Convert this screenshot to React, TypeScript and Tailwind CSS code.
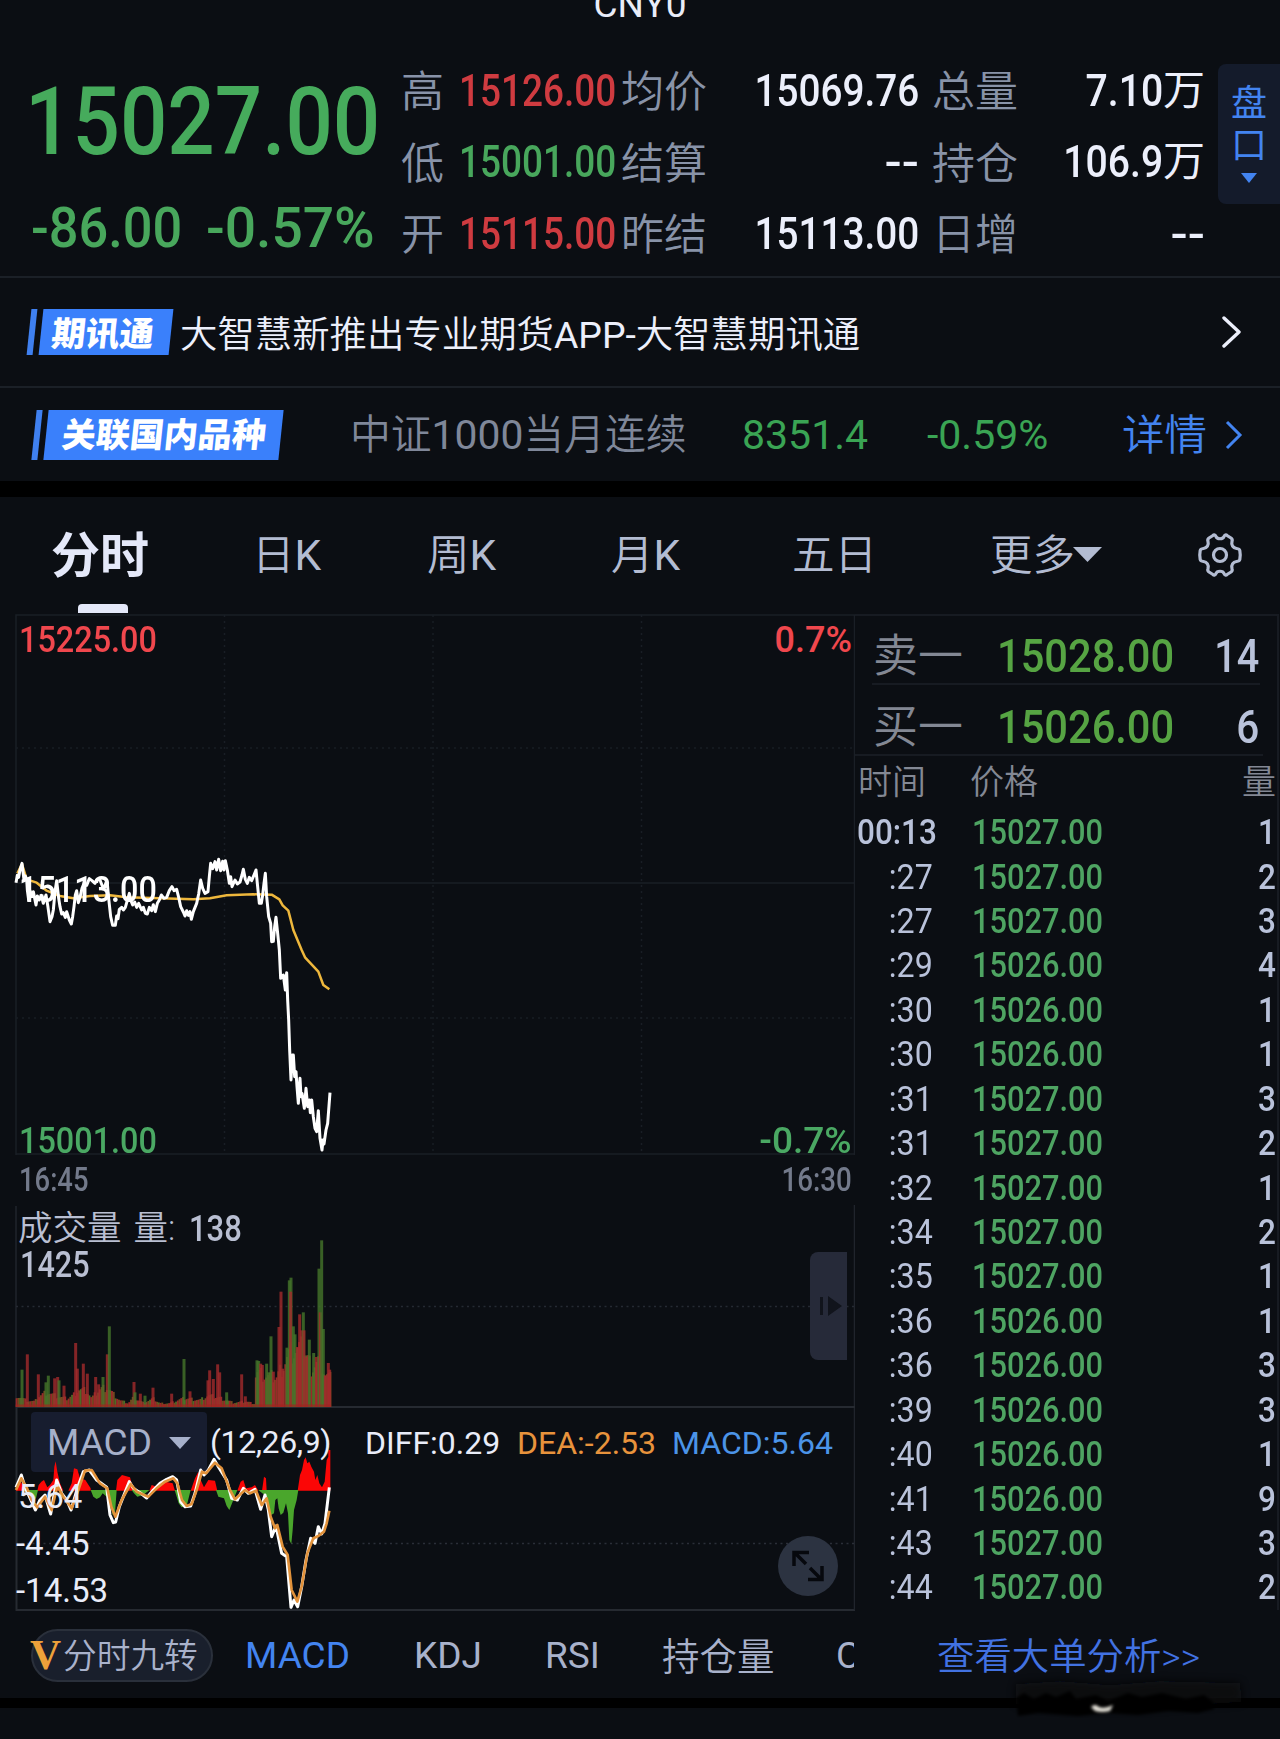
import type { ReactNode } from "react";

type Tick = { time: string; price: string; qty: string };

const stats = [
  ["高", "15126.00", "text-[#cf3b40]", "均价", "15069.76", "总量", "7.10", "万"],
  ["低", "15001.00", "text-[#48a75c]", "结算", "--", "持仓", "106.9", "万"],
  ["开", "15115.00", "text-[#cf3b40]", "昨结", "15113.00", "日增", "--", ""],
];

const ticks: Tick[] = [
  { time: "00:13", price: "15027.00", qty: "1" },
  { time: ":27", price: "15027.00", qty: "2" },
  { time: ":27", price: "15027.00", qty: "3" },
  { time: ":29", price: "15026.00", qty: "4" },
  { time: ":30", price: "15026.00", qty: "1" },
  { time: ":30", price: "15026.00", qty: "1" },
  { time: ":31", price: "15027.00", qty: "3" },
  { time: ":31", price: "15027.00", qty: "2" },
  { time: ":32", price: "15027.00", qty: "1" },
  { time: ":34", price: "15027.00", qty: "2" },
  { time: ":35", price: "15027.00", qty: "1" },
  { time: ":36", price: "15026.00", qty: "1" },
  { time: ":36", price: "15026.00", qty: "3" },
  { time: ":39", price: "15026.00", qty: "3" },
  { time: ":40", price: "15026.00", qty: "1" },
  { time: ":41", price: "15026.00", qty: "9" },
  { time: ":43", price: "15027.00", qty: "3" },
  { time: ":44", price: "15027.00", qty: "2" },
];

const priceLine =
  "48,188 52,166 56,172 60,150 66,130 72,180 76,168 80,178 82,210 86,240 90,212 96,230 100,215 108,255 112,228 118,240 124,226 130,250 138,225 144,262 150,305 156,290 160,270 165,215 170,182 176,235 180,260 185,282 190,278 196,292 200,275 208,300 214,312 218,290 222,260 226,225 230,212 235,248 240,232 246,205 252,190 260,196 268,176 276,182 285,190 292,178 300,180 306,196 312,205 318,188 322,190 326,235 332,290 338,316 346,316 350,288 354,296 358,268 365,262 370,270 376,262 388,220 392,240 398,255 404,246 410,262 416,250 425,270 430,262 436,280 442,282 448,262 455,272 460,254 466,275 472,250 478,240 484,225 492,235 500,232 508,212 516,200 522,212 530,208 536,232 542,260 550,276 555,288 560,272 565,286 570,275 574,298 580,275 590,250 596,222 602,180 608,205 615,220 624,215 628,170 632,130 638,146 645,125 650,150 656,118 662,152 668,124 672,150 676,122 682,150 688,190 692,170 696,200 705,180 712,192 720,186 726,165 730,148 736,178 742,190 748,172 755,182 762,165 768,150 772,190 778,250 784,250 788,225 792,190 796,160 800,230 806,290 812,310 815,365 820,364 824,320 828,292 834,350 838,390 842,475 850,465 852,480 856,510 860,458 863,540 866,600 869,690 873,780 877,705 880,705 884,770 888,755 891,800 895,850 900,775 903,830 906,820 913,865 918,805 923,860 928,840 931,878 935,840 940,890 945,925 950,935 955,872 960,955 966,990 969,960 972,972 978,930 983,910 990,818";

const avgLine =
  "52,160 66,132 80,178 110,188 140,212 180,228 220,235 270,228 330,226 380,232 480,235 580,238 630,235 680,226 760,223 815,224 838,238 848,256 865,272 880,330 905,390 915,412 955,455 970,495 988,508";

// volume envelope: x, bar height
const volBase = [
  [48, 44], [60, 36], [80, 24], [105, 20], [115, 38], [140, 56], [165, 42], [200, 30], [220, 44], [235, 66],
  [260, 60], [275, 32], [300, 66], [320, 74], [340, 48], [360, 24], [385, 14], [400, 34], [430, 16], [460, 30],
  [480, 14], [510, 14], [540, 28], [560, 32], [600, 26], [625, 42], [660, 34], [700, 16], [740, 20], [764, 12],
  [768, 128], [800, 112], [830, 110], [870, 200], [910, 215], [935, 145], [960, 175], [975, 120], [992, 105],
];

// single tall bars: x, height, colour
const volPeaks: [number, number, string][] = [
  [66, 112, "g"], [82, 158, "r"], [115, 98, "r"], [138, 74, "g"], [145, 94, "g"], [164, 86, "r"], [173, 90, "r"],
  [177, 80, "g"], [192, 64, "r"], [227, 192, "r"], [232, 115, "r"], [250, 130, "r"], [262, 100, "r"], [287, 90, "r"],
  [296, 68, "r"], [309, 90, "g"], [322, 158, "r"], [328, 242, "g"], [402, 75, "r"], [405, 44, "g"], [421, 40, "r"],
  [435, 34, "g"], [459, 58, "r"], [515, 40, "r"], [552, 144, "g"], [570, 47, "r"], [624, 80, "r"], [629, 110, "r"],
  [640, 84, "r"], [653, 128, "r"], [659, 104, "r"], [680, 44, "g"], [725, 98, "r"], [736, 32, "r"], [771, 140, "g"],
  [776, 138, "g"], [782, 130, "r"], [787, 126, "r"], [800, 130, "g"], [806, 104, "g"], [813, 212, "g"], [820, 106, "r"],
  [837, 240, "r"], [843, 346, "r"], [848, 115, "r"], [861, 178, "g"], [868, 380, "g"], [873, 388, "g"], [872, 346, "r"],
  [880, 242, "g"], [885, 218, "g"], [892, 180, "r"], [899, 278, "r"], [905, 230, "r"], [910, 284, "g"], [912, 230, "r"],
  [920, 150, "r"], [928, 202, "g"], [941, 162, "g"], [949, 150, "r"], [957, 415, "g"], [961, 284, "r"], [965, 500, "g"],
  [970, 234, "g"], [976, 95, "r"], [985, 132, "r"], [989, 112, "r"],
];

function envelope(x: number) {
  for (let i = 1; i < volBase.length; i++) {
    const [x1, h1] = volBase[i - 1];
    const [x2, h2] = volBase[i];
    if (x <= x2) return h1 + ((h2 - h1) * (x - x1)) / (x2 - x1);
  }
  return 0;
}

const volBars = Array.from({ length: 182 }, (_, i) => {
  const x = 50 + i * 5.2;
  const jitter = 0.62 + (((i * 37) % 17) / 17) * 0.4;
  const mod = (i * 7) % 5;
  return { x, h: envelope(x) * jitter, fill: mod < 2 ? "#98282a" : mod < 4 ? "#74481f" : "#4f6a25" };
});

const diffLine =
  "48,262 64,225 75,262 88,290 106,330 120,300 135,285 152,342 170,240 185,280 200,300 213,330 222,300 232,265 250,215 268,210 290,240 320,262 330,345 340,368 347,366 358,320 388,245 400,265 420,278 440,294 460,270 480,250 500,238 518,230 530,240 542,305 555,320 572,318 585,280 602,210 612,225 625,210 642,178 655,200 680,240 695,295 712,300 730,265 745,280 765,268 782,328 795,285 805,330 815,410 828,378 845,460 860,470 873,622 882,600 893,620 905,560 918,480 932,415 945,430 955,380 965,402 975,370 988,262";

const deaLine =
  "48,270 64,235 80,262 95,300 112,322 135,290 155,330 172,258 190,290 215,325 235,270 255,212 275,210 300,250 322,265 334,320 346,350 365,300 392,252 410,275 445,290 470,265 495,245 520,235 532,250 546,300 560,318 575,312 590,270 606,215 618,220 645,188 665,205 690,270 705,298 735,270 750,280 768,272 785,315 800,295 812,350 825,385 832,375 848,440 863,465 875,570 892,605 905,560 922,460 940,415 955,408 972,395 980,370 988,332";

function Num({ children, className = "" }: { children: ReactNode; className?: string }) {
  return <span className={`inline-block font-medium ${className}`}>{children}</span>;
}

function Badge({ text, className }: { text: string; className: string }) {
  return (
    <div className="flex gap-[6px] -skew-x-[6deg]">
      <div className="w-[6px] bg-[#3f80f0]" />
      <div className={`flex items-center bg-[#3a80fb] font-black text-white ${className}`}>{text}</div>
    </div>
  );
}

function Quote() {
  return (
    <section className="relative h-[276px] shrink-0 overflow-hidden">
      <div className="-mt-[14px] h-[38px] text-center text-[37px] leading-[38px] text-[#e9ecf8]">CNY0</div>
      <div className="flex">
        <div className="w-[402px] shrink-0 pt-[48px]">
          <div className="h-[100px] pl-[25px] text-[94px] leading-[100px] text-[#46ab5c]">
            <Num className="origin-left scale-x-[0.888]">15027.00</Num>
          </div>
          <div className="mt-[28px] flex h-[56px] pl-[31px] text-[56px] leading-[56px] text-[#48a75c]">
            <div className="w-[175px]">
              <Num className="origin-left scale-x-[0.935]">-86.00</Num>
            </div>
            <Num className="origin-left scale-x-[0.985]">-0.57%</Num>
          </div>
        </div>
        <div className="w-[816px] shrink-0 pt-[31px]">
          {stats.map(([l1, v1, color, l2, v2, l3, v3, unit]) => (
            <div key={l1} className="flex h-[71.5px] items-center text-[44px] leading-[60px] text-[#eceffb]">
              <div className="-ml-px w-[58px] shrink-0 pt-[3px] text-[43px] font-[350] text-[#8893a8]">{l1}</div>
              <div className={`w-[162px] shrink-0 ${color}`}>
                <Num className="origin-left scale-x-[0.84]">{v1}</Num>
              </div>
              <div className="w-[87px] shrink-0 pt-[3px] text-[43px] font-[350] text-[#8893a8]">{l2}</div>
              <div className="w-[211px] shrink-0 text-right">
                <Num className={v2 === "--" ? "origin-right scale-x-[1.15]" : "origin-right scale-x-[0.88]"}>{v2}</Num>
              </div>
              <div className="w-[98px] shrink-0 pt-[3px] pl-[13px] text-[43px] font-[350] text-[#8893a8]">{l3}</div>
              <div className="flex w-[188px] shrink-0 justify-end">
                <Num className={v3 === "--" ? "origin-right scale-x-[1.15]" : "origin-right scale-x-[0.89]"}>{v3}</Num>
                {unit && <span className="text-[42px]">{unit}</span>}
              </div>
            </div>
          ))}
        </div>
        <div className="mt-[40px] flex h-[140px] w-[62px] flex-col items-center rounded-l-lg bg-[#141b2b] pt-[19px] text-[36px] leading-[42px] text-[#4384f0]">
          <span>盘</span>
          <span>口</span>
          <svg className="mt-[6px]" width="16" height="10" viewBox="0 0 16 10" fill="#4384f0">
            <path d="M0 0h16L8 10z" />
          </svg>
        </div>
      </div>
    </section>
  );
}

function Promo() {
  return (
    <section className="flex h-[110px] shrink-0 items-center border-t-2 border-[#1b2027] pl-[29px]">
      <div className="flex h-[46px]">
        <Badge text="期讯通" className="w-[130px] pt-[3px] pl-[11px] text-[34px] leading-[46px]" />
      </div>
      <div className="ml-[9px] flex-1 pt-[5px] text-[37.4px] leading-[60px] font-[350] text-[#eceffb]">
        大智慧新推出专业期货<span className="font-normal">APP-</span>大智慧期讯通
      </div>
      <svg className="mr-[38px]" width="20" height="32" viewBox="0 0 20 32" fill="none" stroke="#eceffb" strokeWidth="3.4">
        <path d="M2 2l15 14L2 30" strokeLinecap="round" strokeLinejoin="round" />
      </svg>
    </section>
  );
}

function Related() {
  return (
    <section className="flex h-[95px] shrink-0 items-center border-t-2 border-[#1b2027] pl-[34px] text-[41px] leading-[60px]">
      <div className="flex h-[50px]">
        <Badge text="关联国内品种" className="w-[235px] pl-[16px] text-[34px] leading-[50px]" />
      </div>
      <div className="ml-[69px] w-[392px] shrink-0 pt-[1px] text-[40.8px] font-[350] text-[#7f8799]">
        中证<span className="font-normal">1000</span>当月连续
      </div>
      <div className="w-[185px] shrink-0 text-[#3aa454]">8351.4</div>
      <div className="w-[195px] shrink-0 text-[#3aa454]">-0.59%</div>
      <div className="w-[103px] shrink-0 pt-[2px] text-[42.5px] font-[350] text-[#4384f0]">详情</div>
      <svg width="18" height="30" viewBox="0 0 18 30" fill="none" stroke="#4384f0" strokeWidth="3">
        <path d="M2 2l13 13L2 28" />
      </svg>
    </section>
  );
}

function Tabs() {
  return (
    <nav className="flex h-[117px] shrink-0 pt-[26px] text-[42.5px] leading-[65px] font-[350] text-[#b3bcd2]">
      <div className="flex w-[252px] shrink-0 flex-col pl-[51px] text-[49px] leading-[68px] font-bold text-[#e4e8f9]">
        分时
        <span className="mt-[13px] ml-[27px] h-[9px] w-[50px] rounded-t-sm bg-[#e4e8f9]" />
      </div>
      <div className="w-[175px] shrink-0">日<span className="font-normal">K</span></div>
      <div className="w-[184px] shrink-0">周<span className="font-normal">K</span></div>
      <div className="w-[181px] shrink-0">月<span className="font-normal">K</span></div>
      <div className="w-[198px] shrink-0">五日</div>
      <div className="flex w-[207px] shrink-0">
        <span className="w-[83px]">更多</span>
        <svg className="mt-[24px]" width="29" height="15" viewBox="0 0 29 15" fill="#b3bcd2">
          <path d="M0 0h29L14.500 15z" />
        </svg>
      </div>
      <svg className="mt-[7px]" width="46" height="50" viewBox="0 0 46 50" fill="none" stroke="#b3bcd2" strokeWidth="3.2" strokeLinejoin="round">
        <path d="M16 5.500C17 4.500 18.500 5 19 6.500C20 9.500 26 9.500 27 6.500C27.500 5 29 4.500 30 5.500L34 8C35.500 9 35.500 10 35 11.500C34 15 36 18 39.500 18.500C41 18.700 42.500 19 42.800 20.500C43.400 23.500 43.400 26.500 42.800 29.500C42.500 31 41 31.300 39.500 31.500C36 32 34 35 35 38.500C35.500 40 35.500 41 34 42L30 44.500C29 45.500 27.500 45 27 43.500C26 40.500 20 40.500 19 43.500C18.500 45 17 45.500 16 44.500L12 42C10.500 41 10.500 40 11 38.500C12 35 10 32 6.500 31.500C5 31.300 3.500 31 3.200 29.500C2.600 26.500 2.600 23.500 3.200 20.500C3.500 19 5 18.700 6.500 18.500C10 18 12 15 11 11.500C10.500 10 10.500 9 12 8Z" />
        <circle cx="23" cy="25" r="6.500" />
      </svg>
    </nav>
  );
}

function PricePanel() {
  return (
    <div className="relative h-[541px]">
      <svg className="absolute inset-0" width="855" height="541" fill="none">
        <path d="M16 541V1H855M16 269H855M16 540H855M854.500 1V541" stroke="#1a1f26" strokeWidth="1.500" />
        <path d="M16 134H855M16 404H855M224.500 1V540M433 1V540M641.500 1V540" stroke="#191e25" strokeWidth="1.500" strokeDasharray="2 4" />
        <g transform="translate(0 206) scale(.33333)" strokeLinejoin="round">
          <polyline points={avgLine} stroke="#eeb73c" strokeWidth="7.500" />
          <polyline points={priceLine} stroke="#fff" strokeWidth="9" />
        </g>
      </svg>
      <div className="relative flex h-[541px] flex-col text-[36px] leading-[28px]">
        <div className="mt-[12px] flex justify-between pr-[3px] pl-[19px] text-[#f0474d]">
          <Num className="origin-left scale-x-[0.9]">15225.00</Num>
          <Num className="origin-right">0.7%</Num>
        </div>
        <div className="mt-[222px] pl-[19px] text-white">
          <Num className="origin-left scale-x-[0.9]">15113.00</Num>
        </div>
        <div className="mt-auto flex justify-between pr-[3px] pl-[19px] text-[#4aa863]">
          <Num className="origin-left scale-x-[0.9]">15001.00</Num>
          <Num className="origin-right scale-x-[1.03]">-0.7%</Num>
        </div>
      </div>
    </div>
  );
}

function VolumePanel() {
  return (
    <div className="relative h-[203px] text-[#b9bfd2]">
      <svg className="absolute inset-0" width="855" height="203" fill="none">
        <path d="M16 1V203M854.500 0V203" stroke="#20242c" strokeWidth="1.500" />
        <path d="M16 101.500H855" stroke="#252a33" strokeWidth="1.500" strokeDasharray="2 3.500" />
        <path d="M16 202H855" stroke="#262a31" strokeWidth="2" />
        <g transform="translate(0 202) scale(.33333 -.33333)">
          {volBars.map((b, i) => (
            <rect key={i} x={b.x - 3} width="6" y="0" height={b.h} fill={b.fill} />
          ))}
          {volPeaks.map(([x, h, c], i) => (
            <rect key={i} x={x - 4.5} width="9" y="0" height={h} fill={c === "r" ? "#a32a2c" : "#45762a"} fillOpacity={0.8} />
          ))}
          <path d="M47 4H991" stroke="#a42420" strokeWidth="7" strokeOpacity=".7" />
        </g>
      </svg>
      <div className="relative pt-[4px] pl-[18px]">
        <div className="flex h-[38px] items-center text-[34.500px] leading-[38px] font-[350]">
          成交量<span className="ml-[12px] w-[55px]">量:</span>
          <Num className="origin-left scale-x-[0.86] pt-[3px] text-[36px] leading-[35px]">138</Num>
        </div>
        <div className="pt-[1px] pl-[2px] text-[36px] leading-[34px]">
          <Num className="origin-left scale-x-[0.85]">1425</Num>
        </div>
      </div>
      <div className="absolute top-[47px] left-[810px] flex h-[108px] w-[37px] items-center rounded-l-lg bg-[#262a39] pl-[10px]">
        <svg width="23" height="20" viewBox="0 0 23 20" fill="#11141c">
          <path d="M0 1h3v18H0zM8 0l14 10L8 20z" />
        </svg>
      </div>
    </div>
  );
}

function MacdPanel() {
  return (
    <div className="relative h-[202px] text-[32px] leading-[36px] text-[#e9ecf8]">
      <div className="absolute top-[4px] left-[31px] h-[60px] w-[176px] rounded-sm bg-[#171d2f]" />
      <svg className="absolute inset-0" width="855" height="203" fill="none">
        <path d="M16.500 0V202H855" stroke="#262a31" strokeWidth="2" />
        <path d="M854.500 0V202" stroke="#20242c" strokeWidth="1.500" />
        <path d="M16 135.500H855" stroke="#2b2f38" strokeWidth="1.500" strokeDasharray="2 3.500" />
        <g transform="translate(0 -8) scale(.33333)">
          <path
            fill="#fb0606"
            d="M48 272V258L60 240L72 262V272ZM112 272L116 255L124 245L132 240L142 262L150 255L160 240L163 200L167 184L172 215L180 250L190 272ZM205 272L215 250L222 205L232 208L240 235L256 240L272 265V272ZM348 272L352 240L366 225L390 232L398 260L405 272ZM448 272L455 255L470 260L495 245L518 250L525 272ZM572 272L585 235L595 215L602 240L612 262L625 240L645 242L652 272ZM712 272L722 245L730 240L738 265L755 262L765 255L775 272ZM786 272L792 230L798 235L800 272ZM893 272L900 225L906 210L912 180L917 172L922 190L928 185L934 200L942 215L946 240L952 225L958 250L966 262L974 245L980 180L985 170V150H991V272Z"
          />
          <path
            fill="#4aa62c"
            d="M72 270H114L108 295L100 300L90 290L80 280ZM272 270H350L345 340L338 345L330 310L320 290L308 280L300 292L290 297L280 290ZM395 270H448L430 285L412 290L402 280ZM524 270H572L560 318L545 322L536 310ZM648 270H712L700 300L688 330L680 318L672 295L655 290ZM775 270H895L890 300L882 330L878 390L874 432L868 420L864 340L858 310L850 338L842 345L836 325L832 295L826 300L822 340L814 345L806 320L800 290Z"
          />
          <g strokeLinejoin="round">
            <polyline points={diffLine} stroke="#fff" strokeWidth="9" />
            <polyline points={deaLine} stroke="#e2923b" strokeWidth="8" />
          </g>
        </g>
      </svg>
      <div className="relative flex h-[70px] items-center">
        <div className="flex w-[210px] shrink-0 items-center pl-[47px] text-[37px] text-[#a6b0ca]">
          <span className="w-[122px]">MACD</span>
          <svg width="22" height="12" viewBox="0 0 22 12" fill="#a6b0ca">
            <path d="M0 0h22L11 12z" />
          </svg>
        </div>
        <div className="-mt-[3px] w-[155px] shrink-0 tracking-[-0.4px]">(12,26,9)</div>
        <div className="w-[152px] shrink-0">DIFF:0.29</div>
        <div className="w-[155px] shrink-0 text-[#e8933c]">DEA:-2.53</div>
        <div className="text-[#4b94e8]">MACD:5.64</div>
      </div>
      <div className="relative -mt-[5px] pl-[16px] text-[33px] leading-[47px]">
        <div className="pl-[2px]">5.64</div>
        <div>-4.45</div>
        <div>-14.53</div>
      </div>
      <div className="absolute top-[128px] left-[778px] flex size-[60px] items-center justify-center rounded-full bg-[#2c3341]">
        <svg width="32" height="32" viewBox="0 0 32 32" fill="none" stroke="#06080d" strokeWidth="3.500">
          <path d="M2 16V2.500H17M3 3L14 14M30 16V29.500H16M29 29L18 18" />
        </svg>
      </div>
    </div>
  );
}

function OrderBook() {
  return (
    <div className="h-[996px] w-[424px] shrink-0 border-t-2 border-r-2 border-[#171b22] text-[#b9c2da]">
      <div className="flex h-[67px] items-center pt-[13px] pl-[18px] text-[46px] leading-[56px]">
        <div className="w-[124px] shrink-0 pt-[2px] text-[45px] font-[350] text-[#838894]">卖一</div>
        <div className="w-[170px] shrink-0 text-[#56a443]">
          <Num className="origin-left scale-x-[0.905]">15028.00</Num>
        </div>
        <div className="w-[92px] shrink-0 text-right">
          <Num className="origin-right scale-x-[0.86]">14</Num>
        </div>
      </div>
      <div className="ml-[17px] w-[388px] border-t-2 border-[#171b22]" />
      <div className="flex h-[69px] items-center pt-[15px] pl-[18px] text-[46px] leading-[56px]">
        <div className="w-[124px] shrink-0 pt-[2px] text-[45px] font-[350] text-[#838894]">买一</div>
        <div className="w-[170px] shrink-0 text-[#56a443]">
          <Num className="origin-left scale-x-[0.905]">15026.00</Num>
        </div>
        <div className="w-[92px] shrink-0 text-right">
          <Num className="origin-right scale-x-[0.88]">6</Num>
        </div>
      </div>
      <div className="w-[408px] border-t-2 border-[#171b22]" />
      <div className="flex h-[55px] pl-[3px] text-[34px] leading-[52px] font-[350] text-[#838894]">
        <div className="w-[112px] shrink-0">时间</div>
        <div className="w-[272px] shrink-0">价格</div>
        <div>量</div>
      </div>
      {ticks.map((t, i) => (
        <div key={i} className="flex h-[44.43px] items-center text-[35px] leading-[44px]">
          <div className={`shrink-0 ${i === 0 ? "w-[117px] pl-[2px]" : "w-[117px] pr-[39px] text-right"}`}>
            {i === 0 ? (
              <Num className="origin-left scale-x-[0.9]">{t.time}</Num>
            ) : (
              <span className="inline-block origin-right scale-x-[0.92]">{t.time}</span>
            )}
          </div>
          <div className="w-[200px] shrink-0 text-[#4ea462]">
            <Num className="origin-left scale-x-[0.88]">{t.price}</Num>
          </div>
          <div className="w-[104px] shrink-0 text-right">
            <Num className="origin-right scale-x-[0.9]">{t.qty}</Num>
          </div>
        </div>
      ))}
    </div>
  );
}

function Indicators() {
  return (
    <div className="relative flex h-[88px] shrink-0 items-center text-[37px] leading-[44px] text-[#a9b2cb]">
      <div className="flex w-[854px] shrink-0 items-center overflow-hidden pt-[2px]">
        <div className="ml-[31px] flex h-[53px] w-[182px] shrink-0 items-center rounded-full border-2 border-[#2a303b] bg-[#191f2c]">
          <span className="-ml-[3px] w-[33px] font-['Liberation_Serif',serif] text-[43px] leading-[50px] font-bold text-[#eda23a]">
            V
          </span>
          <span className="pt-[4px] text-[33.700px] font-[350]">分时九转</span>
        </div>
        <div className="ml-[32px] w-[169px] shrink-0 pt-[2px] text-[#4384f0]">MACD</div>
        <div className="w-[131px] shrink-0 pt-[2px]">KDJ</div>
        <div className="w-[117px] shrink-0 pt-[2px]">RSI</div>
        <div className="w-[174px] shrink-0 pt-[3px] text-[37.5px] font-[350]">持仓量</div>
        <div className="pt-[2px]">CCI</div>
      </div>
      <div className="pt-[6px] pl-[83px] text-[37.4px] font-[350] text-[#4272e2]">查看大单分析&gt;&gt;</div>
    </div>
  );
}

// soft dark smear across the footer with a small bright spot
function Smudge() {
  return (
    <svg className="absolute top-[1664px] left-[1000px]" width="260" height="56" fill="none">
      <defs>
        <filter id="soft" x="-20%" y="-40%" width="140%" height="180%">
          <feGaussianBlur stdDeviation="4" />
        </filter>
        <filter id="tiny" x="-10%" y="-30%" width="120%" height="160%">
          <feGaussianBlur stdDeviation="1.4" />
        </filter>
      </defs>
      <path d="M16 20L60 17L110 21L160 17L240 19L242 38L150 44L60 44L16 40Z" fill="#08090b" filter="url(#soft)" opacity=".8" />
      <path d="M16 34l8-5 10 6 12-6 10 4 14-6 6 8 20-4 12 6 20-8 14 4 20-4 24 6 18-4 10 8v6l-16 4-30-2-30 4-30-2-30 3-40-3-20 3z" fill="#030303" filter="url(#tiny)" />
      <path d="M91 43q4-4 8 0q6 2 14-2l-3 6q-8 2-15 0z" fill="#e4e1d8" filter="url(#tiny)" />
    </svg>
  );
}

export default function App() {
  return (
    <div className="relative flex h-[1739px] w-[1280px] flex-col overflow-hidden bg-[#0b0e13] font-['Roboto','Noto_Sans_CJK_SC',sans-serif] whitespace-nowrap">
      <Quote />
      <Promo />
      <Related />
      <div className="h-[16px] shrink-0 bg-black" />
      <Tabs />
      <div className="flex h-[996px] shrink-0">
        <div className="w-[855px] shrink-0">
          <PricePanel />
          <div className="flex h-[50px] items-center justify-between pr-[3px] pl-[19px] text-[33px] leading-[50px] text-[#737a8b]">
            <Num className="origin-left scale-x-[0.83]">16:45</Num>
            <Num className="origin-right scale-x-[0.84]">16:30</Num>
          </div>
          <VolumePanel />
          <MacdPanel />
        </div>
        <OrderBook />
      </div>
      <Indicators />
      <div className="h-[10px] shrink-0 bg-black" />
      <Smudge />
    </div>
  );
}
